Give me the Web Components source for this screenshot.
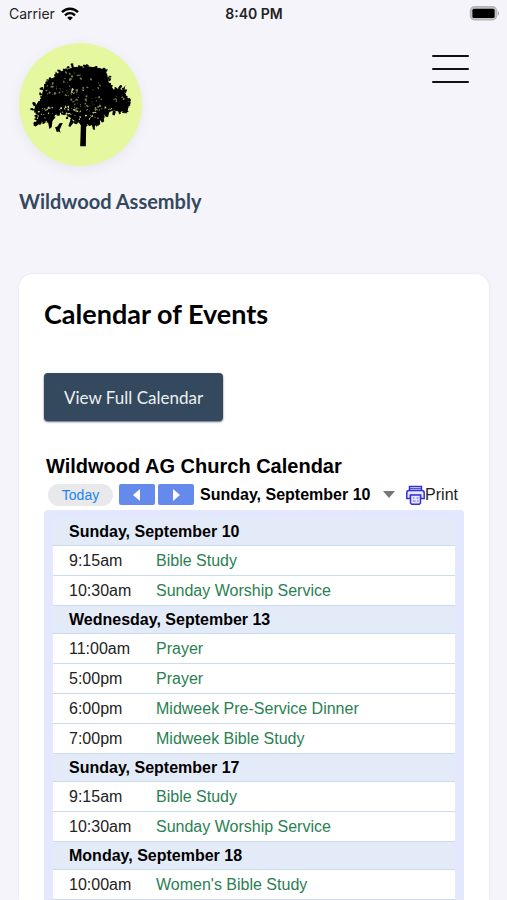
<!DOCTYPE html>
<html lang="en">
<head>
<meta charset="utf-8">
<meta name="viewport" content="width=device-width, initial-scale=1">
<title>Wildwood Assembly</title>
<style>
  html {
    background: #f5f4fa;
  }
  body {
    margin: 0;
    min-height: 100vh;
    display: flex;
    flex-direction: column;
    font-family: Lato, sans-serif;
    color: #000;
  }
</style>
</head>
<body>
  <status-bar carrier="Carrier" time="8:40 PM"></status-bar>
  <site-header>
    <tree-logo slot="logo"></tree-logo>
    <span slot="name">Wildwood Assembly</span>
  </site-header>
  <content-card>
    <span slot="title">Calendar of Events</span>
    <link-button href="#calendar">View Full Calendar</link-button>
    <church-calendar id="calendar">
      <span slot="title">Wildwood AG Church Calendar</span>
      <calendar-toolbar slot="toolbar" date="Sunday, September 10"></calendar-toolbar>
      <calendar-agenda></calendar-agenda>
    </church-calendar>
  </content-card>

<script>
class StatusBar extends HTMLElement {
  constructor() {
    super();
    this.attachShadow({ mode: 'open' });
  }

  connectedCallback() {
    this.shadowRoot.innerHTML = `
      <style>
        :host {
          display: grid;
          grid-template-columns: 1fr auto 1fr;
          align-items: center;
          height: 28px;
          padding: 0 8px 0 9px;
          font: 14px/20px Inter, sans-serif;
          color: #222;
        }
        .carrier {
          display: flex;
          align-items: center;
          gap: 6px;
        }
        .time {
          font-weight: 600;
        }
        .battery {
          justify-self: end;
        }
        svg {
          display: block;
        }
      </style>
      <span class="carrier">
        ${this.getAttribute('carrier')}
        <svg width="18" height="14" viewBox="0 0 18 14" fill="none" stroke="#000" stroke-width="2.4" aria-hidden="true">
          <path d="M1 5.2C5.5 .6 12.5 .6 17 5.2M4 8.3c2.9-2.8 7.1-2.8 10 0"/>
          <path d="M9 13.6 6.2 10.7c1.6-1.5 4-1.5 5.6 0z" fill="#000" stroke="none"/>
        </svg>
      </span>
      <span class="time">${this.getAttribute('time')}</span>
      <svg class="battery" width="30" height="16" viewBox="0 0 30 16" aria-hidden="true">
        <rect x="1.500" y=".8" width="26" height="13" rx="4" fill="#c4c4c6" stroke="#b4b4b6" stroke-width="1.4"/>
        <rect x="3.400" y="2.700" width="22.200" height="9.200" rx="1.5" fill="#000"/>
        <path d="M28.800 5c2 .9 2 3.700 0 4.600z" fill="#aaa"/>
      </svg>
    `;
  }
}

class TreeLogo extends HTMLElement {
  #seed = 17;

  constructor() {
    super();
    this.attachShadow({ mode: 'open' });
  }

  #random() {
    this.#seed = (this.#seed * 16807) % 2147483647;
    return this.#seed / 2147483647;
  }

  // a small ragged shape, used for leaves and for the gaps between them
  #leaf(x, y, size) {
    let points = [];
    for (let i = 0; i < 7; i++) {
      const angle = i / 7 * Math.PI * 2;
      const radius = size * (0.35 + this.#random());
      points.push(`${(x + Math.cos(angle) * radius).toFixed(1)} ${(y + Math.sin(angle) * radius).toFixed(1)}`);
    }
    return `M${points.join('L')}Z`;
  }

  #edgeLeaves(outline) {
    let path = '';
    outline.forEach(([x, y], i) => {
      const [nextX, nextY] = outline[(i + 1) % outline.length];
      const steps = Math.max(2, Math.round(Math.hypot(nextX - x, nextY - y) / 6));
      for (let s = 0; s < steps; s++) {
        const t = s / steps;
        path += this.#leaf(
          x + (nextX - x) * t + (this.#random() - 0.5) * 12,
          y + (nextY - y) * t + (this.#random() - 0.5) * 12,
          5
        );
      }
    });
    return path;
  }

  #gaps(areas) {
    let path = '';
    areas.forEach(([x, y, rx, ry, count]) => {
      for (let i = 0; i < count; i++) {
        path += this.#leaf(
          x + (this.#random() * 2 - 1) * rx,
          y + (this.#random() * 2 - 1) * ry,
          1.2 + this.#random() * 2.6
        );
      }
    });
    return path;
  }

  connectedCallback() {
    const canopy = [
      [72, 226], [76, 210], [91, 198], [97, 172], [104, 148], [118, 132], [136, 126], [146, 112], [166, 105],
      [190, 96], [215, 98], [236, 94], [262, 98], [283, 103], [291, 118], [296, 144], [310, 163],
      [328, 160], [342, 170], [350, 188], [354, 203], [350, 226], [330, 230], [310, 226], [292, 232],
      [278, 244], [266, 264], [247, 270], [230, 266], [207, 262], [190, 254], [170, 240], [150, 232],
      [134, 240], [120, 260], [104, 246], [96, 262], [78, 266], [86, 242]
    ];
    // gaps deep in the canopy are darker than those near its lower edge
    const innerGaps = [
      [125, 160, 16, 20, 16], [195, 124, 32, 12, 16], [190, 195, 24, 34, 30],
      [250, 205, 26, 25, 26], [165, 158, 18, 20, 10], [327, 190, 16, 14, 8], [250, 145, 20, 20, 7]
    ];
    const outerGaps = [
      [140, 225, 36, 12, 18], [218, 158, 3, 7, 4], [205, 238, 32, 14, 18], [185, 165, 4, 8, 4],
      [252, 240, 18, 16, 12], [100, 228, 15, 10, 9], [290, 220, 16, 6, 7]
    ];

    this.shadowRoot.innerHTML = `
      <style>
        :host {
          display: block;
          width: 123px;
          height: 123px;
          border-radius: 50%;
          background: #e6f89f;
          box-shadow: 0 3px 12px rgba(50, 72, 92, .08);
        }
        svg {
          display: block;
          width: 100%;
          height: 100%;
        }
      </style>
      <svg viewBox="27 24 368 368" role="img" aria-label="Tree">
        <path d="M${canopy.map((point) => point.join(' ')).join('L')}Z"/>
        <path d="${this.#edgeLeaves(canopy)}"/>
        <path d="${this.#gaps(innerGaps)}" fill="#77814f"/>
        <path d="${this.#gaps(outerGaps)}" fill="#cbdc8c"/>
        <path d="M213 190h10l1 62 22-34 4 3-22 45-1 67h-17l2-64-32-35 4-3 29 29z"/>
        <path d="M104 252l10 10 4 19 7-6 2-18 10-12-22-4zM82 254l-12 17 7 3 14-10 2-10zM158 263l-10 1-6 10-7 2 5 14 7-1 4 4-2-10 4-9z"/>
        <path d="M245 262l3 20 6 2 0-12 11-7 3-15zM284 228l4 17 5 1 4-14zM308 226l-2 13 7 2 4-12zM333 155l5 7 8-13-4 14 9 0-5 12zM182 250l-7 22 5 3 12-15zM340 220l2 13 7 2 3-14z"/>
      </svg>
    `;
  }
}

class SiteHeader extends HTMLElement {
  constructor() {
    super();
    this.attachShadow({ mode: 'open' });
  }

  connectedCallback() {
    this.shadowRoot.innerHTML = `
      <style>
        :host {
          display: flex;
          justify-content: space-between;
          align-items: flex-start;
          padding: 15px 32px 61px 19px;
        }
        .brand {
          display: grid;
          gap: 23px;
          color: #34495e;
          font-size: 20px;
          font-weight: 700;
          line-height: 24px;
          text-decoration: none;
        }
        button {
          display: grid;
          gap: 11px;
          margin-top: 6px;
          padding: 6px;
          border: 0;
          background: none;
        }
        i {
          width: 37px;
          height: 2px;
          border-radius: 1px;
          background: #111;
        }
      </style>
      <a class="brand" href="#">
        <slot name="logo"></slot>
        <slot name="name"></slot>
      </a>
      <button type="button" aria-label="Menu"><i></i><i></i><i></i></button>
    `;
  }
}

class ContentCard extends HTMLElement {
  constructor() {
    super();
    this.attachShadow({ mode: 'open' });
  }

  connectedCallback() {
    this.shadowRoot.innerHTML = `
      <style>
        :host {
          flex: 1;
          display: flex;
          flex-direction: column;
          align-items: flex-start;
          margin: 0 18px 0 19px;
          padding: 24px 25px 0;
          border-radius: 14px 14px 0 0;
          background: #fff;
          box-shadow: 0 0 3px rgba(0, 0, 0, .08);
        }
        h1 {
          margin: 0 0 43px;
          font-size: 27px;
          font-weight: 700;
          line-height: 32px;
        }
      </style>
      <h1><slot name="title"></slot></h1>
      <slot></slot>
    `;
  }
}

class LinkButton extends HTMLElement {
  constructor() {
    super();
    this.attachShadow({ mode: 'open' });
  }

  connectedCallback() {
    this.shadowRoot.innerHTML = `
      <style>
        :host {
          display: block;
        }
        a {
          display: block;
          padding: 13px 20px 11px;
          border-radius: 4px;
          background: #34495e;
          box-shadow: 0 1px 2px rgba(20, 30, 70, .7);
          color: #ecf0f1;
          font-size: 17px;
          line-height: 24px;
          text-decoration: none;
        }
      </style>
      <a href="${this.getAttribute('href')}"><slot></slot></a>
    `;
  }
}

class ChurchCalendar extends HTMLElement {
  constructor() {
    super();
    this.attachShadow({ mode: 'open' });
  }

  connectedCallback() {
    this.shadowRoot.innerHTML = `
      <style>
        :host {
          flex: 1;
          align-self: stretch;
          display: flex;
          flex-direction: column;
          margin-top: 32px;
          font-family: "Liberation Sans", Arial, sans-serif;
          font-size: 16px;
        }
        h2 {
          margin: 0 2px;
          font-size: 20px;
          line-height: 26px;
        }
        .frame {
          flex: 1;
          padding: 8px 9px 0;
          border-radius: 4px 4px 0 0;
          background: #e3e8ff;
        }
      </style>
      <h2><slot name="title"></slot></h2>
      <slot name="toolbar"></slot>
      <div class="frame"><slot></slot></div>
    `;
  }
}

class CalendarToolbar extends HTMLElement {
  constructor() {
    super();
    this.attachShadow({ mode: 'open' });
  }

  connectedCallback() {
    this.shadowRoot.innerHTML = `
      <style>
        :host {
          display: flex;
          align-items: center;
          height: 31px;
          padding: 0 6px 0 4px;
          white-space: nowrap;
        }
        button {
          display: flex;
          align-items: center;
          justify-content: center;
          margin: 0;
          padding: 0;
          border: 0;
          background: none;
          color: inherit;
          font: inherit;
        }
        .today {
          width: 65px;
          height: 22px;
          margin-right: 6px;
          border-radius: 11px;
          background: #e9e9eb;
          color: #1a84f5;
          font-size: 14px;
        }
        .step {
          width: 36px;
          height: 21px;
          margin-right: 3px;
          border-radius: 2px;
          background: #668aec;
        }
        .date {
          gap: 13px;
          margin-left: 3px;
          font-weight: 700;
        }
        .print {
          display: flex;
          align-items: center;
          margin-left: auto;
          color: #222;
          text-decoration: none;
        }
      </style>
      <button type="button" class="today">Today</button>
      <button type="button" class="step" aria-label="Previous">
        <svg width="8" height="12" viewBox="0 0 8 12" fill="#fff"><path d="M7 0v12L0 6z"/></svg>
      </button>
      <button type="button" class="step" aria-label="Next">
        <svg width="8" height="12" viewBox="0 0 8 12" fill="#fff"><path d="M1 0v12l7-6z"/></svg>
      </button>
      <button type="button" class="date">
        ${this.getAttribute('date')}
        <svg width="12" height="7" viewBox="0 0 12 7" fill="#777"><path d="M0 0h12L6 7z"/></svg>
      </button>
      <a class="print" href="#print">
        <svg width="19" height="20" viewBox="0 0 19 20" fill="#e6e6ff" stroke="#3432d5" stroke-width="1.5">
          <path d="M3.500 6V1.500h12V6"/>
          <path d="M3 5.500h13c1.500 0 2.200 1 2.200 2.500v5.500h-3.700v-3h-10v3H.8V8c0-1.500.7-2.500 2.200-2.500z"/>
          <path d="M3.500 3.700h12" stroke-width="1"/>
          <path d="M4.500 10h10v8l-1.200 1.200H5.700L4.500 18z"/>
          <path d="M7 13h1.500m2 0h2M7 16h2.500m1.500 0h1.500" stroke="#8f8df0"/>
        </svg>
        Print
      </a>
    `;
  }
}

class CalendarAgenda extends HTMLElement {
  #days = [
    ['Sunday, September 10', [
      ['9:15am', 'Bible Study'],
      ['10:30am', 'Sunday Worship Service']
    ]],
    ['Wednesday, September 13', [
      ['11:00am', 'Prayer'],
      ['5:00pm', 'Prayer'],
      ['6:00pm', 'Midweek Pre-Service Dinner'],
      ['7:00pm', 'Midweek Bible Study']
    ]],
    ['Sunday, September 17', [
      ['9:15am', 'Bible Study'],
      ['10:30am', 'Sunday Worship Service']
    ]],
    ['Monday, September 18', [
      ['10:00am', "Women's Bible Study"]
    ]]
  ];

  constructor() {
    super();
    this.attachShadow({ mode: 'open' });
  }

  #renderDay([date, events]) {
    return `
      <tbody>
        <tr><th colspan="2" scope="rowgroup">${date}</th></tr>
        ${events.map(([time, title]) => `
          <tr>
            <td class="time">${time}</td>
            <td><a href="#event">${title}</a></td>
          </tr>
        `).join('')}
      </tbody>
    `;
  }

  connectedCallback() {
    this.shadowRoot.innerHTML = `
      <style>
        :host {
          display: block;
        }
        table {
          width: 100%;
          border-spacing: 0;
          background: #fff;
          line-height: 20px;
        }
        th, td {
          box-sizing: border-box;
          padding: 0 0 0 16px;
          border-bottom: 1px solid #c9dcf0;
          text-align: left;
        }
        th {
          height: 28px;
          background: #e4ebf8;
        }
        td {
          height: 30px;
          padding-top: 1px;
          padding-left: 0;
        }
        .time {
          width: 103px;
          padding-left: 16px;
          color: #222;
        }
        a {
          color: #2a8052;
          text-decoration: none;
        }
      </style>
      <table>${this.#days.map((day) => this.#renderDay(day)).join('')}</table>
    `;
  }
}

customElements.define('status-bar', StatusBar);
customElements.define('tree-logo', TreeLogo);
customElements.define('site-header', SiteHeader);
customElements.define('content-card', ContentCard);
customElements.define('link-button', LinkButton);
customElements.define('church-calendar', ChurchCalendar);
customElements.define('calendar-toolbar', CalendarToolbar);
customElements.define('calendar-agenda', CalendarAgenda);
</script>
</body>
</html>
